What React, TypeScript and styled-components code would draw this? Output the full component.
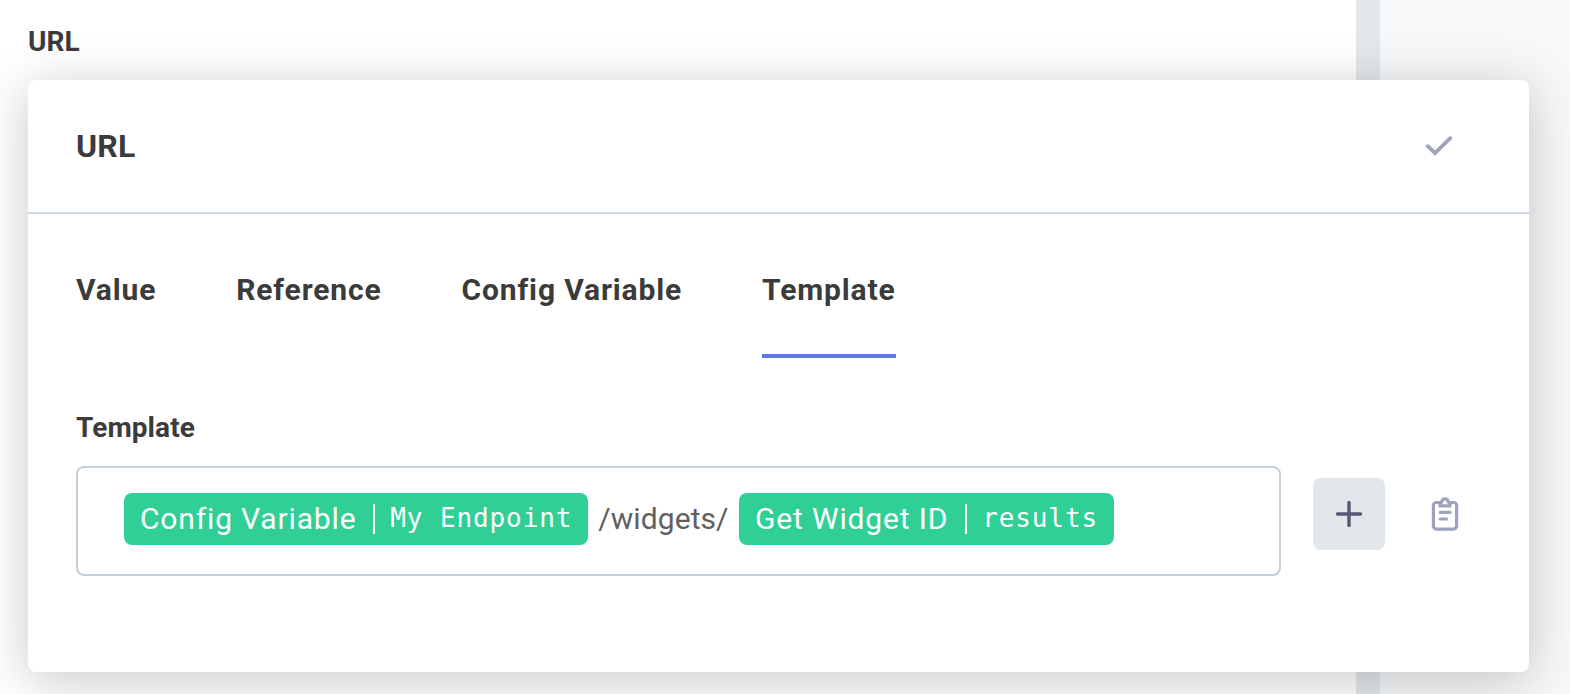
import React from "react";
import styled, { createGlobalStyle } from "styled-components";

const GlobalStyle = createGlobalStyle`
  *, *::before, *::after { box-sizing: border-box; }
  body {
    margin: 0;
    font-family: Roboto, sans-serif;
    color: #3b3b3b;
    background: #ffffff;
  }
`;

const Page = styled.div`
  display: grid;
  grid-template-columns: 1356px 24px 1fr;
  height: 694px;
  overflow: hidden;
`;

const Main = styled.main`
  padding: 24px 0 0 28px;
  min-width: 0;
`;

const Gutter = styled.div`
  background: #e2e8ec;
`;

const Side = styled.aside`
  background: #f6f8fa;
`;

const Label = styled.div`
  font-size: 28px;
  line-height: 36px;
  font-weight: 700;
  letter-spacing: 0.1px;
`;

const Card = styled.section`
  position: relative;
  width: 1501px;
  height: 592px;
  margin-top: 20px;
  border-radius: 8px;
  background: #ffffff;
  box-shadow: 0 8px 52px rgba(0, 0, 0, 0.22);
`;

const CardHeader = styled.header`
  display: flex;
  align-items: center;
  justify-content: space-between;
  height: 134px;
  padding: 0 72px 0 48px;
  border-bottom: 2px solid #d0d9e1;
`;

const CardTitle = styled.h2`
  margin: 0;
  font-size: 32px;
  line-height: 40px;
  font-weight: 700;
  letter-spacing: 0.2px;
`;

const CardBody = styled.div`
  padding: 48px 48px 0;
`;

const Tabs = styled.nav`
  display: flex;
  gap: 80px;
  height: 96px;
`;

const Tab = styled.button<{ $active?: boolean }>`
  display: flex;
  align-items: flex-start;
  padding: 8px 0 0;
  border: 0;
  border-bottom: 4px solid ${(p) => (p.$active ? "#5d78e0" : "transparent")};
  background: none;
  color: inherit;
  font: 700 30px/40px Roboto, sans-serif;
  letter-spacing: 0.86px;
`;

const Field = styled.div`
  padding-top: 52px;
`;

const FieldRow = styled.div`
  display: flex;
  align-items: flex-start;
  margin-top: 20px;
`;

const TemplateInput = styled.div`
  display: flex;
  align-items: flex-start;
  width: 1205px;
  height: 110px;
  padding: 25px 46px;
  border: 2px solid #c5d0da;
  border-radius: 8px;
`;

const Chip = styled.span`
  display: flex;
  align-items: center;
  height: 52px;
  padding: 0 16px;
  border-radius: 8px;
  background: #2fcf95;
  color: #ffffff;
  white-space: pre;
`;

const ChipSource = styled.span`
  font-size: 30px;
  line-height: 52px;
  letter-spacing: 0.84px;
`;

const ChipDivider = styled.span`
  width: 2px;
  height: 30px;
  margin: 0 15.4px 0 16.5px;
  background: #ffffff;
`;

const ChipPath = styled.code`
  padding-bottom: 2px;
  font: 26px/50px "DejaVu Sans Mono", monospace;
  letter-spacing: 0.89px;
`;

const Literal = styled.span`
  margin: 0 10.5px 0 10px;
  color: #5f5f5f;
  font-size: 30px;
  line-height: 52px;
  letter-spacing: 0.08px;
`;

const IconButton = styled.button<{ $filled?: boolean }>`
  display: flex;
  align-items: center;
  justify-content: center;
  width: 72px;
  height: 72px;
  padding: 0;
  border: 0;
  border-radius: 8px;
  color: ${(p) => (p.$filled ? "#555873" : "#9fa2bb")};
  background: ${(p) => (p.$filled ? "#e2e7eb" : "transparent")};
`;

const HeaderAction = styled(IconButton)`
  width: 36px;
  height: 36px;
`;

const Actions = styled.div`
  display: flex;
  gap: 24px;
  margin: 12px 0 0 32px;
`;

const Icon = styled.svg<{ $weight?: number }>`
  display: block;
  width: 36px;
  height: 36px;
  fill: none;
  stroke: currentColor;
  stroke-width: ${(p) => p.$weight ?? 3.4};
  stroke-linecap: round;
`;

const CheckIcon = () => (
  <Icon viewBox="0 0 36 36" $weight={3.9}>
    <path d="M6.800 18.200 14 25.100 29.300 10.200" />
  </Icon>
);

const PlusIcon = () => (
  <Icon viewBox="0 0 36 36">
    <path d="M18 6.500v23M6.500 18h23" />
  </Icon>
);

const ClipboardIcon = () => (
  <Icon viewBox="0 0 36 36" $weight={3.2} strokeLinejoin="round">
    <path d="M12 6.500H9.400a3 3 0 0 0-3 3V30.100a3 3 0 0 0 3 3h17.200a3 3 0 0 0 3-3V9.500a3 3 0 0 0-3-3H24" />
    <path d="M13 9.900V6.500h1.400c.4-2.200 1.700-3.600 3.600-3.600s3.200 1.400 3.600 3.600H23v3.400z" />
    <path d="M13.200 16.300h10M13.200 23h6.300" />
  </Icon>
);

export default function App() {
  return (
    <>
      <GlobalStyle />
      <Page>
        <Main>
          <Label>URL</Label>
          <Card>
            <CardHeader>
              <CardTitle>URL</CardTitle>
              <HeaderAction aria-label="Confirm">
                <CheckIcon />
              </HeaderAction>
            </CardHeader>
            <CardBody>
              <Tabs>
                <Tab>Value</Tab>
                <Tab>Reference</Tab>
                <Tab>Config Variable</Tab>
                <Tab $active>Template</Tab>
              </Tabs>
              <Field>
                <Label>Template</Label>
                <FieldRow>
                  <TemplateInput>
                    <Chip>
                      <ChipSource>Config Variable</ChipSource>
                      <ChipDivider />
                      <ChipPath>My Endpoint</ChipPath>
                    </Chip>
                    <Literal>/widgets/</Literal>
                    <Chip>
                      <ChipSource>Get Widget ID</ChipSource>
                      <ChipDivider />
                      <ChipPath>results</ChipPath>
                    </Chip>
                  </TemplateInput>
                  <Actions>
                    <IconButton $filled aria-label="Add">
                      <PlusIcon />
                    </IconButton>
                    <IconButton aria-label="Paste">
                      <ClipboardIcon />
                    </IconButton>
                  </Actions>
                </FieldRow>
              </Field>
            </CardBody>
          </Card>
        </Main>
        <Gutter />
        <Side />
      </Page>
    </>
  );
}
